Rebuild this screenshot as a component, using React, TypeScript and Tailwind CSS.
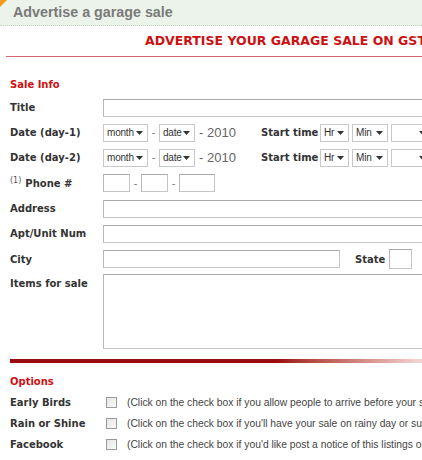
import React from 'react';

const boldFont = { fontFamily: '"DejaVu Sans", Verdana, sans-serif' };
const label = "w-[93px] shrink-0 text-[10px] font-bold text-[#333]";

const Select = ({ text, w }: { text: string; w: string }) => (
  <div className={`${w} h-[18px] border border-[#c8c8c8] bg-white flex items-center justify-between pl-[3px] pr-[4px] shrink-0`}>
    <span className="text-[10px] tracking-[-0.2px] text-[#333] leading-none">{text}</span>
    <svg width="7" height="4" viewBox="0 0 7 4" className="shrink-0">
      <path d="M0 0h7L3.5 4z" fill="#333" />
    </svg>
  </div>
);

const Input = ({ w, h = "h-[18px]" }: { w: string; h?: string }) => (
  <div className={`${w} ${h} shrink-0 border border-[#c4c4c4] border-t-[#aaa] border-l-[#b8b8b8] bg-white`} />
);

const Dash = () => <span className="w-[11px] shrink-0 text-center text-[11px] text-[#777]">-</span>;

const Label = ({ children, className = "" }: { children: React.ReactNode; className?: string }) => (
  <div className={`${label} ${className}`} style={boldFont}>{children}</div>
);

const DateRow = ({ name }: { name: string }) => (
  <div className="flex items-center h-[25px]">
    <Label>{name}</Label>
    <Select text="month" w="w-[45px]" />
    <span className="text-[11px] text-[#777] w-[11px] text-center">-</span>
    <Select text="date" w="w-[36px]" />
    <span className="text-[13px] text-[#666] pl-[4px] w-[66px]">- 2010</span>
    <span className="text-[10px] font-bold text-[#333] w-[59px]" style={boldFont}>Start time</span>
    <Select text="Hr" w="w-[29px]" />
    <div className="w-[3px]" />
    <Select text="Min" w="w-[36px]" />
    <div className="w-[3px]" />
    <Select text="" w="w-[40px]" />
  </div>
);

const Option = ({ name, text }: { name: string; text: string }) => (
  <div className="flex items-center h-[21px]">
    <div className="w-[96px] shrink-0 text-[10px] font-bold text-[#333]" style={boldFont}>{name}</div>
    <div className="w-[11px] h-[11px] shrink-0 border border-[#999] bg-gradient-to-br from-[#e6e6e6] to-[#fafafa]" />
    <div className="pl-[10px] whitespace-nowrap text-[10.3px] text-[#444]">{text}</div>
  </div>
);

export default function App() {
  return (
    <div className="w-[422px] h-[460px] overflow-hidden bg-white" style={{ fontFamily: '"Liberation Sans", Arial, sans-serif' }}>
      <div className="w-[600px]">
        <div className="relative h-[26px] bg-[#ebf3ea] border-b border-dotted border-[#c9cfc8] flex items-center pl-[13px]">
          <div className="absolute left-0 top-0 w-0 h-0 border-t-[7px] border-r-[7px] border-t-[#f29b1e] border-r-transparent" />
          <span className="text-[14.3px] font-bold text-[#7a7a7a]">Advertise a garage sale</span>
        </div>

        <div className="pl-[6px]">
          <div className="border-b border-[#cf6a6a] h-[31px] flex items-end pb-[5px] pl-[139px]">
            <span className="font-bold text-[#cc1111] whitespace-nowrap text-[12.5px]" style={boldFont}>
              ADVERTISE YOUR GARAGE SALE ON GSTREET
            </span>
          </div>
        </div>

        <div className="pl-[10px]">
          <div className="pt-[21px] h-[42px] text-[10px] font-bold text-[#cc1111] leading-[14px]" style={boldFont}>Sale Info</div>

          <div className="flex items-center h-[25px] -mt-[4px]">
            <Label>Title</Label>
            <Input w="w-[400px]" />
          </div>

          <DateRow name="Date (day-1)" />
          <DateRow name="Date (day-2)" />

          <div className="flex items-center h-[26px]">
            <Label>
              <sup className="text-[8px] font-normal text-[#555] mr-[4px]">(1)</sup>Phone #
            </Label>
            <Input w="w-[27px]" />
            <Dash />
            <Input w="w-[27px]" />
            <Dash />
            <Input w="w-[36px]" />
          </div>

          <div className="flex items-center h-[25px]">
            <Label>Address</Label>
            <Input w="w-[400px]" />
          </div>
          <div className="flex items-center h-[25px]">
            <Label>Apt/Unit Num</Label>
            <Input w="w-[400px]" />
          </div>
          <div className="flex items-center h-[26px]">
            <Label>City</Label>
            <Input w="w-[237px]" />
            <span className="pl-[15px] w-[49px] shrink-0 text-[10px] font-bold text-[#333]" style={boldFont}>State</span>
            <Input w="w-[23px]" h="h-[20px]" />
          </div>
          <div className="flex items-start pt-[2px]">
            <Label className="pt-[2px]">Items for sale</Label>
            <Input w="w-[400px]" h="h-[75px]" />
          </div>

          <div className="mt-[10px] h-[4px] w-[412px] bg-gradient-to-r from-[#9b0c0c] from-65% to-[#f3d6d6]" />

          <div className="pt-[12px] h-[29px] text-[10px] font-bold text-[#cc1111] leading-[14px]" style={boldFont}>Options</div>
          <Option name="Early Birds" text="(Click on the check box if you allow people to arrive before your start time)" />
          <Option name="Rain or Shine" text="(Click on the check box if you'll have your sale on rainy day or sunny day)" />
          <Option name="Facebook" text="(Click on the check box if you'd like post a notice of this listings on Facebook)" />
        </div>
      </div>
    </div>
  );
}
